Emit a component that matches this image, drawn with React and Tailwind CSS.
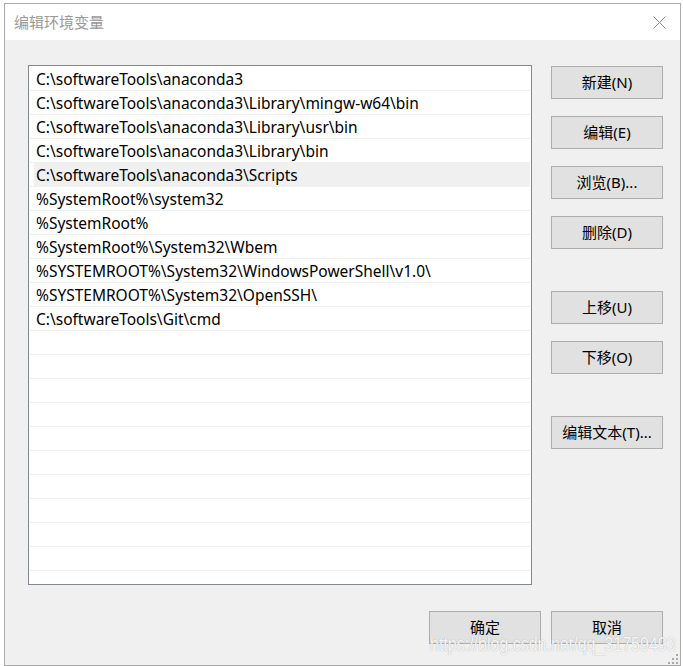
import React from 'react';

const paths = [
  'C:\\softwareTools\\anaconda3',
  'C:\\softwareTools\\anaconda3\\Library\\mingw-w64\\bin',
  'C:\\softwareTools\\anaconda3\\Library\\usr\\bin',
  'C:\\softwareTools\\anaconda3\\Library\\bin',
  'C:\\softwareTools\\anaconda3\\Scripts',
  '%SystemRoot%\\system32',
  '%SystemRoot%',
  '%SystemRoot%\\System32\\Wbem',
  '%SYSTEMROOT%\\System32\\WindowsPowerShell\\v1.0\\',
  '%SYSTEMROOT%\\System32\\OpenSSH\\',
  'C:\\softwareTools\\Git\\cmd',
];

const rows = [...paths, ...Array(12).fill('')];

function Btn({ children, className = '' }) {
  return (
    <button
      className={`w-[112px] h-[33px] border border-[#adadad] bg-[#e1e1e1] text-[15px] text-black flex items-center justify-center ${className}`}
    >
      {children}
    </button>
  );
}

export default function App() {
  return (
    <div
      className="w-[683px] h-[666px] bg-white pl-[4px] pt-[3px] overflow-hidden"
      style={{ fontFamily: '"Noto Sans", "Noto Sans CJK SC", sans-serif' }}
    >
      <div className="relative w-[677px] h-[663px] border border-[#aaaaaa] bg-[#f0f0f0] flex flex-col">
        {/* title bar */}
        <div className="h-[36px] bg-white flex items-center justify-between pl-[9px] pr-[14px]">
          <span className="text-[15px] text-[#999999]">编辑环境变量</span>
          <svg width="13" height="13" viewBox="0 0 13 13">
            <path d="M0.5 0.5 L12.5 12.5 M12.5 0.5 L0.5 12.5" stroke="#8c8c8c" strokeWidth="1" />
          </svg>
        </div>

        {/* body */}
        <div className="flex-1 pt-[25px] pl-[23px] pr-[17px] flex flex-col">
          <div className="flex">
            <div className="w-[504px] h-[520px] border border-[#828790] bg-white pt-[1px] overflow-hidden">
              {rows.map((p, i) => (
                <div key={i} className="h-[24px] mx-[1px] border-b border-[#f0f0f0] flex">
                  <div
                    className={`flex-1 flex items-center pt-[2px] text-[15.5px] text-black whitespace-nowrap ${
                      i === 4 ? 'ml-[4px] pl-[2px] bg-[#f0f0f0]' : 'pl-[6px]'
                    }`}
                  >
                    {p}
                  </div>
                </div>
              ))}
            </div>

            <div className="ml-[19px] pt-[1px] flex flex-col">
              <Btn>新建(N)</Btn>
              <Btn className="mt-[17px]">编辑(E)</Btn>
              <Btn className="mt-[17px]">浏览(B)...</Btn>
              <Btn className="mt-[17px]">删除(D)</Btn>
              <Btn className="mt-[42px]">上移(U)</Btn>
              <Btn className="mt-[17px]">下移(O)</Btn>
              <Btn className="mt-[42px]">编辑文本(T)...</Btn>
            </div>
          </div>

          <div className="mt-[26px] flex justify-end gap-[10px]">
            <Btn>确定</Btn>
            <Btn>取消</Btn>
          </div>
        </div>

        {/* watermark */}
        <div
          className="absolute left-[425px] top-[633px] text-[16px] leading-none scale-y-125 text-white/90 [text-shadow:0_0_1px_#9a9a9a] whitespace-nowrap pointer-events-none"
          style={{ fontFamily: '"Liberation Sans", Arial, sans-serif' }}
        >
          https://blog.csdn.net/qq_31759493
        </div>

        {/* resize grip */}
        <svg className="absolute right-[2px] bottom-[1px]" width="10" height="10" viewBox="0 0 10 10">
          <rect x="8" y="0" width="2" height="2" fill="#a8a8a8" />
          <rect x="4" y="4" width="2" height="2" fill="#a8a8a8" />
          <rect x="8" y="4" width="2" height="2" fill="#a8a8a8" />
          <rect x="0" y="8" width="2" height="2" fill="#a8a8a8" />
          <rect x="4" y="8" width="2" height="2" fill="#a8a8a8" />
          <rect x="8" y="8" width="2" height="2" fill="#a8a8a8" />
        </svg>
      </div>
    </div>
  );
}
